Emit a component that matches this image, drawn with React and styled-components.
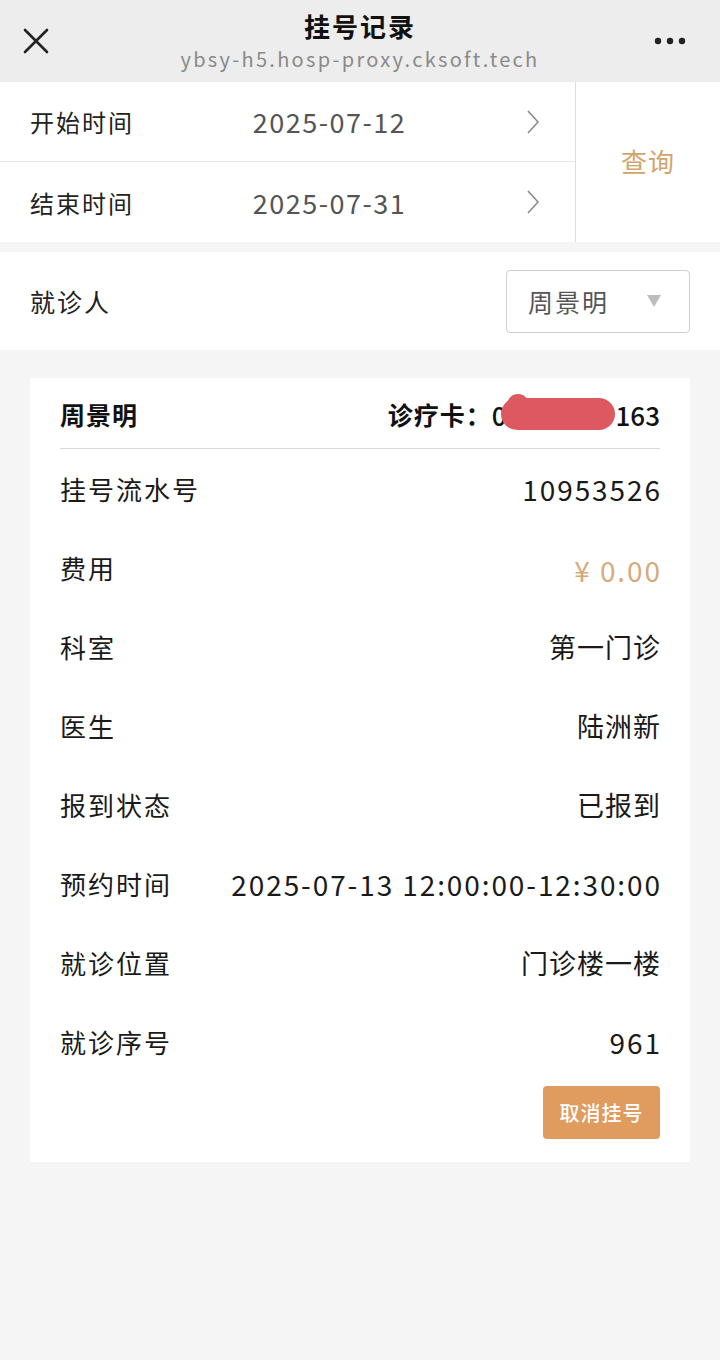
import React from "react";
import styled, { createGlobalStyle } from "styled-components";

const Global = createGlobalStyle`
  html, body { margin: 0; padding: 0; background: #f5f5f5; }
  body { font-family: "Noto Sans CJK SC", "Noto Sans", sans-serif; color: #1a1a1a; }
  * { box-sizing: border-box; }
`;

const Page = styled.div`
  width: 720px;
  min-height: 1360px;
  background: #f5f5f5;
`;

const NavBar = styled.header`
  height: 82px;
  background: #ededed;
  display: grid;
  grid-template-columns: 80px 1fr 80px;
  align-items: center;
`;

const NavIcon = styled.div`
  display: flex;
  align-items: center;
  justify-content: ${(p) => (p.$right ? "flex-end" : "flex-start")};
  padding: ${(p) => (p.$right ? "0 34px 0 0" : "0 0 0 22px")};
  height: 100%;
`;

const TitleBox = styled.div`
  height: 100%;
  display: flex;
  flex-direction: column;
  align-items: center;
  padding-top: 7px;
`;

const Title = styled.h1`
  margin: 0;
  font-size: 26px;
  font-weight: 700;
  line-height: 37px;
  letter-spacing: 2px;
  color: #111;
`;

const Url = styled.div`
  font-size: 20px;
  line-height: 29px;
  letter-spacing: 2.3px;
  color: #8a8a8a;
`;

const DateBlock = styled.section`
  display: flex;
  background: #fff;
  margin-bottom: 10px;
`;

const DateList = styled.div`
  width: 575px;
  display: flex;
  flex-direction: column;
`;

const DateRow = styled.div`
  height: 80px;
  display: grid;
  grid-template-columns: 160px 1fr 60px;
  align-items: center;
  padding-left: 30px;
  border-bottom: ${(p) => (p.$divider ? "1px solid #e6e6e6" : "none")};
`;

const DateLabel = styled.span`
  font-size: 24px;
  letter-spacing: 2px;
  color: #222;
`;

const DateValue = styled.span`
  font-size: 27px;
  letter-spacing: 1.5px;
  color: #555;
  text-align: center;
  padding-right: 46px;
`;

const Chevron = styled.span`
  display: flex;
  justify-content: flex-start;
  padding-left: 10px;
`;

const QueryButton = styled.button`
  flex: 1;
  border: none;
  border-left: 1px solid #dcdcdc;
  background: #fff;
  font-family: inherit;
  font-size: 26px;
  letter-spacing: 1px;
  color: #d2a46b;
  padding: 0 0 4px 0;
`;

const PatientBar = styled.section`
  height: 98px;
  background: #fff;
  display: flex;
  align-items: center;
  justify-content: space-between;
  padding: 0 30px;
`;

const PatientLabel = styled.span`
  font-size: 25px;
  letter-spacing: 2px;
  color: #222;
`;

const Select = styled.div`
  width: 184px;
  height: 63px;
  border: 1px solid #cfcfcf;
  border-radius: 4px;
  display: flex;
  align-items: center;
  justify-content: space-between;
  padding: 0 28px 0 21px;
  font-size: 25px;
  letter-spacing: 2px;
  color: #555;
`;

const Caret = styled.span`
  width: 0;
  height: 0;
  border-left: 7px solid transparent;
  border-right: 7px solid transparent;
  border-top: 12px solid #bdbdbd;
`;

const Card = styled.article`
  margin: 28px 30px 0;
  background: #fff;
  padding: 0 30px 23px;
`;

const CardHead = styled.div`
  height: 71px;
  display: flex;
  align-items: center;
  justify-content: space-between;
  border-bottom: 1px solid #d9d9d9;
  padding-top: 2px;
`;

const HeadText = styled.span`
  font-size: 25px;
  font-weight: 700;
  letter-spacing: 1px;
  color: #111;
  display: flex;
  align-items: center;
`;

const CardNo = styled.span`
  font-weight: 500;
  font-size: 26px;
  letter-spacing: 0;
`;

const Redact = styled.span`
  position: relative;
  display: inline-block;
  width: 114px;
  height: 32px;
  margin: 0 1px 0 -6px;
  border-radius: 16px;
  background: #dd5860;
  &::before {
    content: "";
    position: absolute;
    left: 6px;
    top: -4px;
    width: 22px;
    height: 22px;
    border-radius: 50%;
    background: #dd5860;
  }
`;

const InfoRow = styled.div`
  height: 79px;
  display: flex;
  align-items: center;
  justify-content: space-between;
`;

const InfoLabel = styled.span`
  font-size: 26px;
  color: #1a1a1a;
  letter-spacing: 2px;
`;

const InfoValue = styled.span`
  font-size: ${(p) => (p.$digits ? "28px" : "27px")};
  letter-spacing: ${(p) => (p.$digits ? "1.9px" : "1px")};
  margin-right: ${(p) => (p.$digits ? "-1.9px" : "-1px")};
  color: ${(p) => (p.$accent ? "#d6aa7c" : "#1a1a1a")};
  padding-top: ${(p) => (p.$accent ? "4px" : "0")};
`;

const Actions = styled.div`
  display: flex;
  justify-content: flex-end;
  padding-top: 5px;
`;

const CancelButton = styled.button`
  width: 117px;
  height: 53px;
  border: none;
  border-radius: 4px;
  background: #e09b5f;
  color: #fff;
  font-family: inherit;
  font-size: 20px;
  font-weight: 500;
  letter-spacing: 1px;
  padding: 0;
`;

const rows = [
  { label: "挂号流水号", value: "10953526", digits: true },
  { label: "费用", value: "¥ 0.00", digits: true, accent: true },
  { label: "科室", value: "第一门诊" },
  { label: "医生", value: "陆洲新" },
  { label: "报到状态", value: "已报到" },
  { label: "预约时间", value: "2025-07-13 12:00:00-12:30:00", digits: true },
  { label: "就诊位置", value: "门诊楼一楼" },
  { label: "就诊序号", value: "961", digits: true },
];

const ChevronIcon = () => (
  <svg width="16" height="26" viewBox="0 0 16 26">
    <path d="M3 2 L13 13 L3 24" fill="none" stroke="#8a8a8a" strokeWidth="1.6" />
  </svg>
);

export default function App() {
  return (
    <Page>
      <Global />
      <NavBar>
        <NavIcon>
          <svg width="28" height="28" viewBox="0 0 28 28">
            <path d="M3 3 L25 25 M25 3 L3 25" stroke="#222" strokeWidth="2.6" strokeLinecap="round" />
          </svg>
        </NavIcon>
        <TitleBox>
          <Title>挂号记录</Title>
          <Url>ybsy-h5.hosp-proxy.cksoft.tech</Url>
        </TitleBox>
        <NavIcon $right>
          <svg width="32" height="8" viewBox="0 0 32 8">
            <circle cx="4" cy="4" r="3.2" fill="#222" />
            <circle cx="16" cy="4" r="3.2" fill="#222" />
            <circle cx="28" cy="4" r="3.2" fill="#222" />
          </svg>
        </NavIcon>
      </NavBar>

      <DateBlock>
        <DateList>
          <DateRow $divider>
            <DateLabel>开始时间</DateLabel>
            <DateValue>2025-07-12</DateValue>
            <Chevron><ChevronIcon /></Chevron>
          </DateRow>
          <DateRow>
            <DateLabel>结束时间</DateLabel>
            <DateValue>2025-07-31</DateValue>
            <Chevron><ChevronIcon /></Chevron>
          </DateRow>
        </DateList>
        <QueryButton>查询</QueryButton>
      </DateBlock>

      <PatientBar>
        <PatientLabel>就诊人</PatientLabel>
        <Select>
          <span>周景明</span>
          <Caret />
        </Select>
      </PatientBar>

      <Card>
        <CardHead>
          <HeadText>周景明</HeadText>
          <HeadText>
            诊疗卡：<CardNo>0</CardNo>
            <Redact />
            <CardNo>163</CardNo>
          </HeadText>
        </CardHead>
        {rows.map((r) => (
          <InfoRow key={r.label}>
            <InfoLabel>{r.label}</InfoLabel>
            <InfoValue $accent={r.accent} $digits={r.digits}>{r.value}</InfoValue>
          </InfoRow>
        ))}
        <Actions>
          <CancelButton>取消挂号</CancelButton>
        </Actions>
      </Card>
    </Page>
  );
}
